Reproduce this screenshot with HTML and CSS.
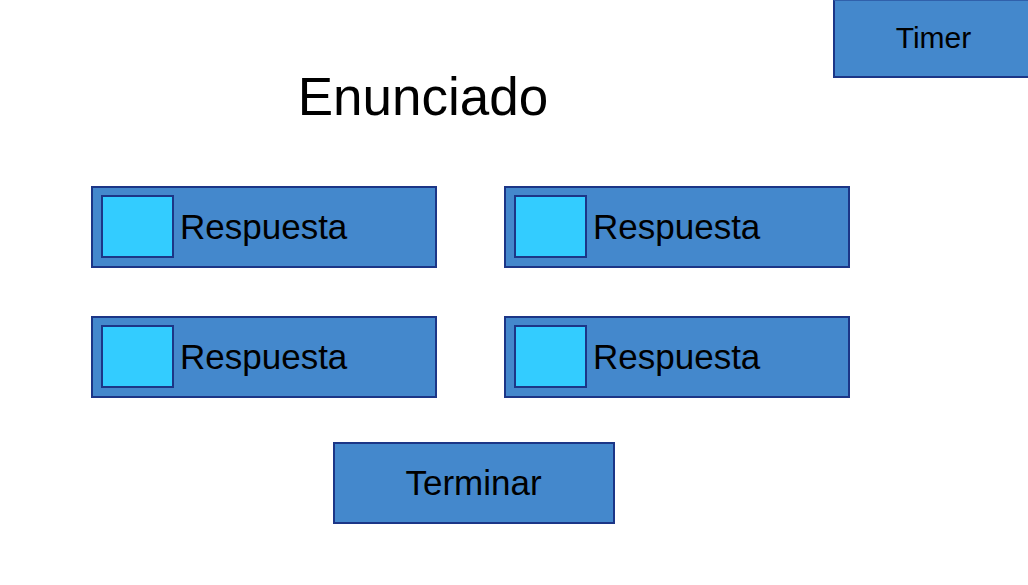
FILE: index.html
```html
<!DOCTYPE html>
<html lang="es">
<head>
  <meta charset="utf-8">
  <meta name="viewport" content="width=device-width, initial-scale=1">
  <title>Enunciado</title>
  <link rel="stylesheet" href="styles.css">
</head>
<body>
  <header class="header">
    <h1 class="title">Enunciado</h1>
    <div class="timer" role="timer">Timer</div>
  </header>
  <form class="quiz">
    <div class="answers">
      <label class="answer"><input class="answer-check" type="checkbox" name="respuesta" value="1">Respuesta</label>
      <label class="answer"><input class="answer-check" type="checkbox" name="respuesta" value="2">Respuesta</label>
      <label class="answer"><input class="answer-check" type="checkbox" name="respuesta" value="3">Respuesta</label>
      <label class="answer"><input class="answer-check" type="checkbox" name="respuesta" value="4">Respuesta</label>
    </div>
    <button class="finish" type="button">Terminar</button>
  </form>
</body>
</html>
```

FILE: styles.css
```css
:root {
  --panel: #4488cc;
  --line: #1c3687;
  --check: #33ccff;
}

* {
  box-sizing: border-box;
}

body {
  margin: 0;
  background: #ffffff;
  color: #000000;
  font-family: "Liberation Sans", Arial, sans-serif;
  font-size: 35px;
  line-height: 40px;
}

.header {
  display: flex;
  align-items: flex-start;
}

.title {
  flex: 1;
  margin: 0;
  padding: 67px 0 59px 13px;
  font-size: 53px;
  font-weight: 400;
  line-height: 60px;
  text-align: center;
}

.timer {
  width: 195px;
  padding: 17px 0 18px 4px;
  border: 2px solid var(--line);
  border-top: 1px solid #3060ab;
  border-right: 0;
  background: var(--panel);
  font-size: 30px;
  text-align: center;
}

.quiz {
  display: flex;
  flex-direction: column;
  gap: 44px;
  padding: 0 178px 61px 91px;
}

.answers {
  display: grid;
  grid-template-columns: 1fr 1fr;
  gap: 48px 67px;
}

.answer {
  display: flex;
  align-items: center;
  gap: 6px;
  padding: 7px 8px 8px;
  border: 2px solid var(--line);
  background: var(--panel);
}

.answer-check {
  appearance: none;
  flex: none;
  width: 73px;
  height: 63px;
  margin: 0;
  border: 2px solid var(--line);
  background: var(--check);
}

.answer-check:checked {
  background: var(--line);
}

.finish {
  align-self: center;
  width: 282px;
  margin-left: 6px;
  padding: 19px 0;
  border: 2px solid var(--line);
  background: var(--panel);
  color: inherit;
  font: inherit;
}
```
